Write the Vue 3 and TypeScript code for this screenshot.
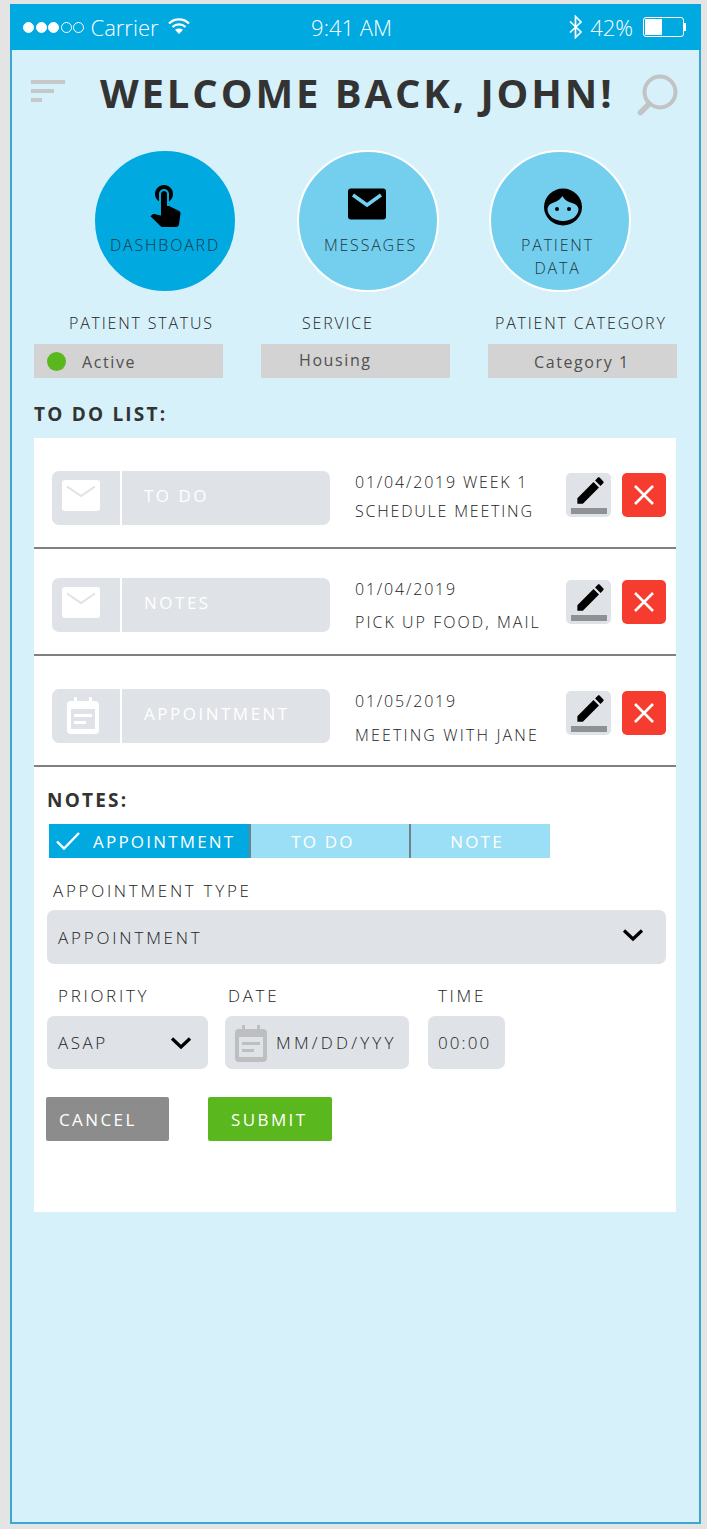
<script setup lang="ts">
interface Todo { icon: 'mail' | 'cal'; tag: string; line1: string; line2: string; cls: string }
const todos: Todo[] = [
  { icon: 'mail', tag: 'TO DO', line1: '01/04/2019 WEEK 1', line2: 'SCHEDULE MEETING', cls: 'r1' },
  { icon: 'mail', tag: 'NOTES', line1: '01/04/2019', line2: 'PICK UP FOOD, MAIL', cls: 'r2' },
  { icon: 'cal', tag: 'APPOINTMENT', line1: '01/05/2019', line2: 'MEETING WITH JANE', cls: 'r3' }
]
</script>

<template>
  <div class="phone">
    <div class="status">
      <div class="st-left">
        <span class="dot on"></span><span class="dot on"></span><span class="dot on"></span><span class="dot"></span><span class="dot"></span>
        <span class="carrier">Carrier</span>
        <svg class="wifi" width="22" height="18" viewBox="0 0 22 18"><path d="M1 6.500C6.500 1 15.500 1 21 6.500" fill="none" stroke="#fff" stroke-width="2.200"/><path d="M4.500 10C8 6.500 14 6.500 17.500 10" fill="none" stroke="#fff" stroke-width="2.200"/><path d="M7 12.800C9.500 11 12.500 11 15 12.800L11 17Z" fill="#fff"/></svg>
      </div>
      <div class="st-time">9:41 AM</div>
      <div class="st-right">
        <svg width="15" height="24" viewBox="0 0 15 24"><path d="M2 6.500L13 17L7.500 22.500V1.500L13 7L2 17.500" fill="none" stroke="#fff" stroke-width="1.700"/></svg>
        <span class="pct">42%</span>
        <div class="batt"><div class="batt-fill"></div></div>
        <div class="batt-tip"></div>
      </div>
    </div>

    <header class="head">
      <div class="ham"><i class="h1"></i><i class="h2"></i><i class="h3"></i></div>
      <h1 class="title">WELCOME BACK, JOHN!</h1>
      <svg class="search" width="42" height="42" viewBox="0 0 42 42"><circle cx="24" cy="18" r="15.500" fill="none" stroke="#c1c3c5" stroke-width="4"/><path d="M13 30L4.500 38.500" stroke="#c1c3c5" stroke-width="5.500" stroke-linecap="round"/></svg>
    </header>

    <div class="circles">
      <div class="circle active">
        <svg class="c-ic touch" width="48" height="48" viewBox="0 0 24 24"><path d="M9 11.240V7.500C9 6.120 10.120 5 11.500 5S14 6.120 14 7.500v3.740c1.210-.81 2-2.180 2-3.740C16 5.010 13.990 3 11.500 3S7 5.010 7 7.500c0 1.560.79 2.930 2 3.740zm9.840 4.630l-4.540-2.260c-.17-.07-.35-.11-.54-.11H13v-6c0-.83-.67-1.500-1.500-1.500S10 6.670 10 7.500v10.740l-3.430-.72c-.08-.01-.15-.03-.24-.03-.31 0-.59.13-.79.33l-.79.8 4.940 4.940c.27.27.65.44 1.060.44h6.790c.75 0 1.330-.55 1.440-1.280l.75-5.270c.01-.07.02-.14.02-.2 0-.62-.38-1.160-.91-1.380z" fill="#000"/></svg>
        <span class="c-label dash">DASHBOARD</span>
      </div>
      <div class="circle light">
        <svg class="c-ic mail" width="40" height="32" viewBox="0 0 40 32"><rect x="1" y="0.500" width="38" height="31" rx="3" fill="#000"/><path d="M6 7L20 17L34 7" fill="none" stroke="#74cfee" stroke-width="3.500"/></svg>
        <span class="c-label msg">MESSAGES</span>
      </div>
      <div class="circle light">
        <svg class="c-ic face" width="40" height="38" viewBox="0 0 40 38"><ellipse cx="20" cy="19" rx="19" ry="18.500" fill="#000"/><path d="M4.500 21C5 16.500 9 15 12 14C15 13 17.500 11 19.500 8C21 11.500 25 14 29 15C33 16 35 18 35.500 21C35.500 28 28.500 33 20 33C11.500 33 4.500 28 4.500 21Z" fill="#74cfee"/><circle cx="14" cy="21" r="2" fill="#000"/><circle cx="26" cy="21" r="2" fill="#000"/></svg>
        <span class="c-label pd">PATIENT<br />DATA</span>
      </div>
    </div>

    <div class="meta">
      <div class="m-label l1">PATIENT STATUS</div>
      <div class="m-label l2">SERVICE</div>
      <div class="m-label l3">PATIENT CATEGORY</div>
      <div class="m-box b1"><span class="green"></span>Active</div>
      <div class="m-box b2">Housing</div>
      <div class="m-box b3">Category 1</div>
    </div>

    <h2 class="list-title">TO DO LIST:</h2>

    <div class="card">
      <div v-for="t in todos" :key="t.tag" class="row" :class="t.cls">
        <div class="pill">
          <div class="pill-ic">
            <svg v-if="t.icon === 'mail'" width="38" height="31" viewBox="0 0 38 31"><rect x="0" y="0" width="38" height="31" rx="3" fill="#fff"/><path d="M5 6.500L19 16L33 6.500" fill="none" stroke="#dfe2e6" stroke-width="2"/></svg>
            <svg v-else class="cal" width="34" height="38" viewBox="0 0 34 38"><path d="M8 1h3v4h12V1h3v4h3a4 4 0 0 1 4 4v25a4 4 0 0 1-4 4H5a4 4 0 0 1-4-4V9a4 4 0 0 1 4-4h3Z" fill="#fff"/><rect x="5" y="13" width="24" height="20" fill="#dfe2e6"/><rect x="8" y="18" width="18" height="3" fill="#fff"/><rect x="8" y="25" width="12" height="3" fill="#fff"/></svg>
          </div>
          <div class="pill-text">{{ t.tag }}</div>
        </div>
        <div class="lines">
          <div class="l-a">{{ t.line1 }}</div>
          <div class="l-b">{{ t.line2 }}</div>
        </div>
        <div class="edit">
          <svg width="35" height="35" viewBox="0 0 24 24"><path d="M3 17.250V21h3.750L17.810 9.940l-3.750-3.750L3 17.250zM20.710 7.040c.39-.39.39-1.020 0-1.410l-2.340-2.340c-.39-.39-1.020-.39-1.410 0l-1.830 1.830 3.750 3.750 1.830-1.830z" fill="#000"/></svg>
          <div class="edit-bar"></div>
        </div>
        <div class="del">
          <svg width="22" height="22" viewBox="0 0 22 22"><path d="M2 2L20 20M20 2L2 20" stroke="#fff" stroke-width="2.600"/></svg>
        </div>
      </div>

      <div class="form">
        <h3 class="notes">NOTES:</h3>
        <div class="tabs">
          <div class="tab t-on">
            <svg width="26" height="20" viewBox="0 0 26 20"><path d="M2 10.500L9 17.500L24 2" fill="none" stroke="#fff" stroke-width="2.400"/></svg>
            <span>APPOINTMENT</span>
          </div>
          <div class="tab t-2">TO DO</div>
          <div class="tab t-3">NOTE</div>
        </div>
        <div class="f-label type-l">APPOINTMENT TYPE</div>
        <div class="field wide">
          <span>APPOINTMENT</span>
          <svg width="22" height="14" viewBox="0 0 22 14"><path d="M2 2.500L11 11L20 2.500" fill="none" stroke="#000" stroke-width="3.200"/></svg>
        </div>
        <div class="trio-labels">
          <div class="f-label p-l">PRIORITY</div>
          <div class="f-label d-l">DATE</div>
          <div class="f-label t-l">TIME</div>
        </div>
        <div class="trio">
          <div class="field prio">
            <span>ASAP</span>
            <svg width="22" height="14" viewBox="0 0 22 14"><path d="M2 2.500L11 11L20 2.500" fill="none" stroke="#000" stroke-width="3.200"/></svg>
          </div>
          <div class="field date">
            <svg width="34" height="38" viewBox="0 0 34 38"><path d="M8 1h3v4h12V1h3v4h3a4 4 0 0 1 4 4v25a4 4 0 0 1-4 4H5a4 4 0 0 1-4-4V9a4 4 0 0 1 4-4h3Z" fill="#bcbec0"/><rect x="5" y="13" width="24" height="20" fill="#dfe2e6"/><rect x="8" y="18" width="18" height="3" fill="#bcbec0"/><rect x="8" y="25" width="12" height="3" fill="#bcbec0"/></svg>
            <span>MM/DD/YYY</span>
          </div>
          <div class="field time">00:00</div>
        </div>
        <div class="actions">
          <button class="btn cancel">CANCEL</button>
          <button class="btn submit">SUBMIT</button>
        </div>
      </div>
    </div>
  </div>
</template>

<style>
html, body { margin: 0; background: #e4e4e4; }
</style>

<style scoped>
* { box-sizing: border-box; }
.phone {
  width: 691px; height: 1520px; margin: 4px 0 0 10px;
  border: 2px solid #37a9d3; border-top: 0;
  background: #d7f1fa; font-family: "Open Sans", sans-serif; color: #333;
}
.status {
  height: 46px; margin: 0 -2px; background: #00a9e0; color: #fff;
  display: grid; grid-template-columns: 1fr auto 1fr; align-items: center;
  padding: 0 15px 0 13px; font-size: 22px; font-weight: 300;
}
.st-left { display: flex; align-items: center; }
.dot { width: 11px; height: 11px; border: 1px solid #fff; border-radius: 50%; margin-right: 1.500px; }
.dot.on { background: #fff; }
.carrier { margin-left: 5px; }
.wifi { margin-left: 9px; margin-bottom: 3px; }
.st-time { margin-left: -6px; }
.st-right { display: flex; align-items: center; justify-content: flex-end; }
.pct { margin-left: 7px; margin-right: 10px; }
.batt { width: 41px; height: 20px; border: 1.500px solid #fff; border-radius: 3px; padding: 1px; }
.batt-fill { width: 17px; height: 100%; background: #fff; }
.batt-tip { width: 2px; height: 8px; background: #fff; }

.head { height: 90px; display: flex; align-items: flex-start; padding: 24px 0 0 19px; }
.ham { width: 34px; margin-top: 6px; }
.ham i { display: block; height: 4px; background: #c5c7c9; margin-bottom: 5px; }
.ham .h1 { width: 34px; }
.ham .h2 { width: 23px; }
.ham .h3 { width: 11px; margin-bottom: 0; }
.title {
  margin: -4px 0 0 35px; width: 514px; white-space: nowrap;
  font-size: 40px; line-height: 46px; font-weight: 700; letter-spacing: 2.900px; color: #333;
}
.search { margin-left: 22px; }

.circles {
  margin: 11px 0 0 83px; display: grid; grid-template-columns: 203px 192px 140px;
}
.circle {
  width: 140px; height: 140px; border-radius: 50%; background: #74cfee;
  border: 2px solid #fff; display: flex; flex-direction: column; align-items: center;
  padding-top: 30px; color: #1f3642; font-size: 16px; font-weight: 300; letter-spacing: 1.800px; line-height: 23px; text-align: center;
}
.circle.light { width: 142px; height: 142px; margin: -1px; padding-top: 31px; }
.circle.active { background: #00a9e0; border-color: #00a9e0; }
.c-ic { flex: none; }
.touch { margin-top: -4px; }
.mail { margin-top: 5px; margin-left: -2px; }
.face { margin-top: 5px; margin-left: 6px; }
.dash { margin-top: 7px; }
.msg { margin-top: 14px; margin-left: 5px; }
.pd { margin-top: 8px; margin-left: -5px; }

.meta {
  margin: 21px 0 0 22px; display: grid; grid-template-columns: repeat(3, 189px); column-gap: 38px;
}
.m-label { font-size: 16px; font-weight: 300; letter-spacing: 1.800px; line-height: 22px; color: #222; height: 32px; white-space: nowrap; }
.l1 { padding-left: 35px; }
.l2 { padding-left: 41px; }
.l3 { padding-left: 7px; }
.m-box {
  height: 34px; background: #d3d3d3; display: flex; align-items: center;
  font-size: 16px; font-weight: 400; letter-spacing: 1.600px; color: #505050;
}
.b1 { padding: 1px 0 0 13px; }
.b2 { padding: 0 0 3px 38px; }
.b3 { padding: 1px 0 0 46px; }
.green { width: 19px; height: 19px; border-radius: 50%; background: #5ab71d; margin: -1px 16px 0 0; }

.list-title { margin: 25px 0 0 22px; height: 35px; font-size: 19px; line-height: 22px; letter-spacing: 2.200px; font-weight: 700; color: #333; }

.card { margin-left: 22px; width: 642px; height: 774px; background: #fff; }
.row {
  display: flex; align-items: flex-start; padding: 33px 0 0 18px;
  border-bottom: 2px solid #808080;
}
.r1 { height: 111px; }
.r2 { height: 107px; padding-top: 29px; }
.r3 { height: 111px; }
.pill { width: 278px; height: 54px; border-radius: 7px; background: #dfe2e6; display: flex; flex: none; }
.pill-ic { width: 70px; border-right: 2px solid #fff; padding: 9px 0 0 10px; }
.pill-ic .cal { margin: -2px 0 0 4px; }
.pill-text { padding: 12px 0 0 22px; font-size: 17px; line-height: 26px; letter-spacing: 2.500px; font-weight: 400; color: #fff; }
.lines { width: 211px; margin-left: 25px; font-size: 16px; letter-spacing: 1.800px; font-weight: 300; color: #222; white-space: nowrap; flex: none; }
.l-a { line-height: 22px; }
.l-b { line-height: 22px; margin-top: 7px; }
.r2 .l-b { margin-top: 11px; letter-spacing: 2.050px; }
.r3 .l-a { margin-top: 1px; }
.r3 .l-b { margin-top: 12px; letter-spacing: 2.150px; }
.edit { width: 45px; height: 44px; margin-top: 2px; background: #dfe2e6; border-radius: 5px; padding: 0 0 0 5px; flex: none; }
.edit svg { display: block; margin-left: 2px; }
.edit-bar { width: 36px; height: 6px; background: #8f9295; }
.del { width: 44px; height: 44px; margin: 2px 0 0 11px; background: #f63b2f; border-radius: 5px; display: flex; align-items: center; justify-content: center; flex: none; }

.form { padding: 0 0 0 13px; }
.notes { margin: 22px 0 0; height: 35px; font-size: 19px; line-height: 22px; letter-spacing: 2.200px; font-weight: 700; color: #333; }
.tabs { margin: 0 0 0 2px; display: flex; height: 34px; width: 501px; color: #fff; font-size: 17px; letter-spacing: 2.200px; font-weight: 400; }
.tab { display: flex; align-items: center; justify-content: center; background: #9adff6; border-right: 2px solid #6f8189; }
.t-on { width: 202px; background: #00a9e0; justify-content: flex-start; padding-left: 6px; }
.t-on span { margin-left: 12px; }
.t-2 { width: 160px; padding-right: 14px; }
.t-3 { width: 139px; border-right: 0; padding-right: 7px; }
.f-label { font-size: 17px; line-height: 22px; letter-spacing: 2.700px; font-weight: 300; color: #222; white-space: nowrap; }
.type-l { margin: 22px 0 0 6px; height: 30px; }
.field { height: 54px; background: #dfe2e6; border-radius: 7px; display: flex; align-items: center; font-size: 17px; letter-spacing: 2.800px; font-weight: 300; color: #222; }
.wide { width: 619px; padding: 0 22px 0 11px; justify-content: space-between; }
.wide svg { margin-bottom: 4px; }
.trio-labels { display: flex; margin-top: 21px; height: 31px; }
.p-l { margin-left: 11px; width: 170px; }
.d-l { width: 210px; }
.trio { display: flex; }
.prio { width: 161px; height: 53px; padding: 0 16px 0 11px; justify-content: space-between; letter-spacing: 2.500px; }
.date { width: 184px; height: 53px; margin-left: 17px; padding-left: 9px; letter-spacing: 3.200px; }
.date span { margin-left: 8px; white-space: nowrap; }
.time { width: 77px; height: 53px; margin-left: 19px; padding-left: 10px; letter-spacing: 2.100px; }
.actions { display: flex; margin: 28px 0 0 -1px; }
.btn { height: 44px; border: 0; border-radius: 2px; color: #fff; font: 400 17px "Open Sans", sans-serif; letter-spacing: 2.400px; text-align: left; }
.cancel { width: 123px; background: #8c8c8c; padding-left: 13px; }
.submit { width: 124px; background: #5ab71d; margin-left: 39px; padding-left: 23px; }
</style>
